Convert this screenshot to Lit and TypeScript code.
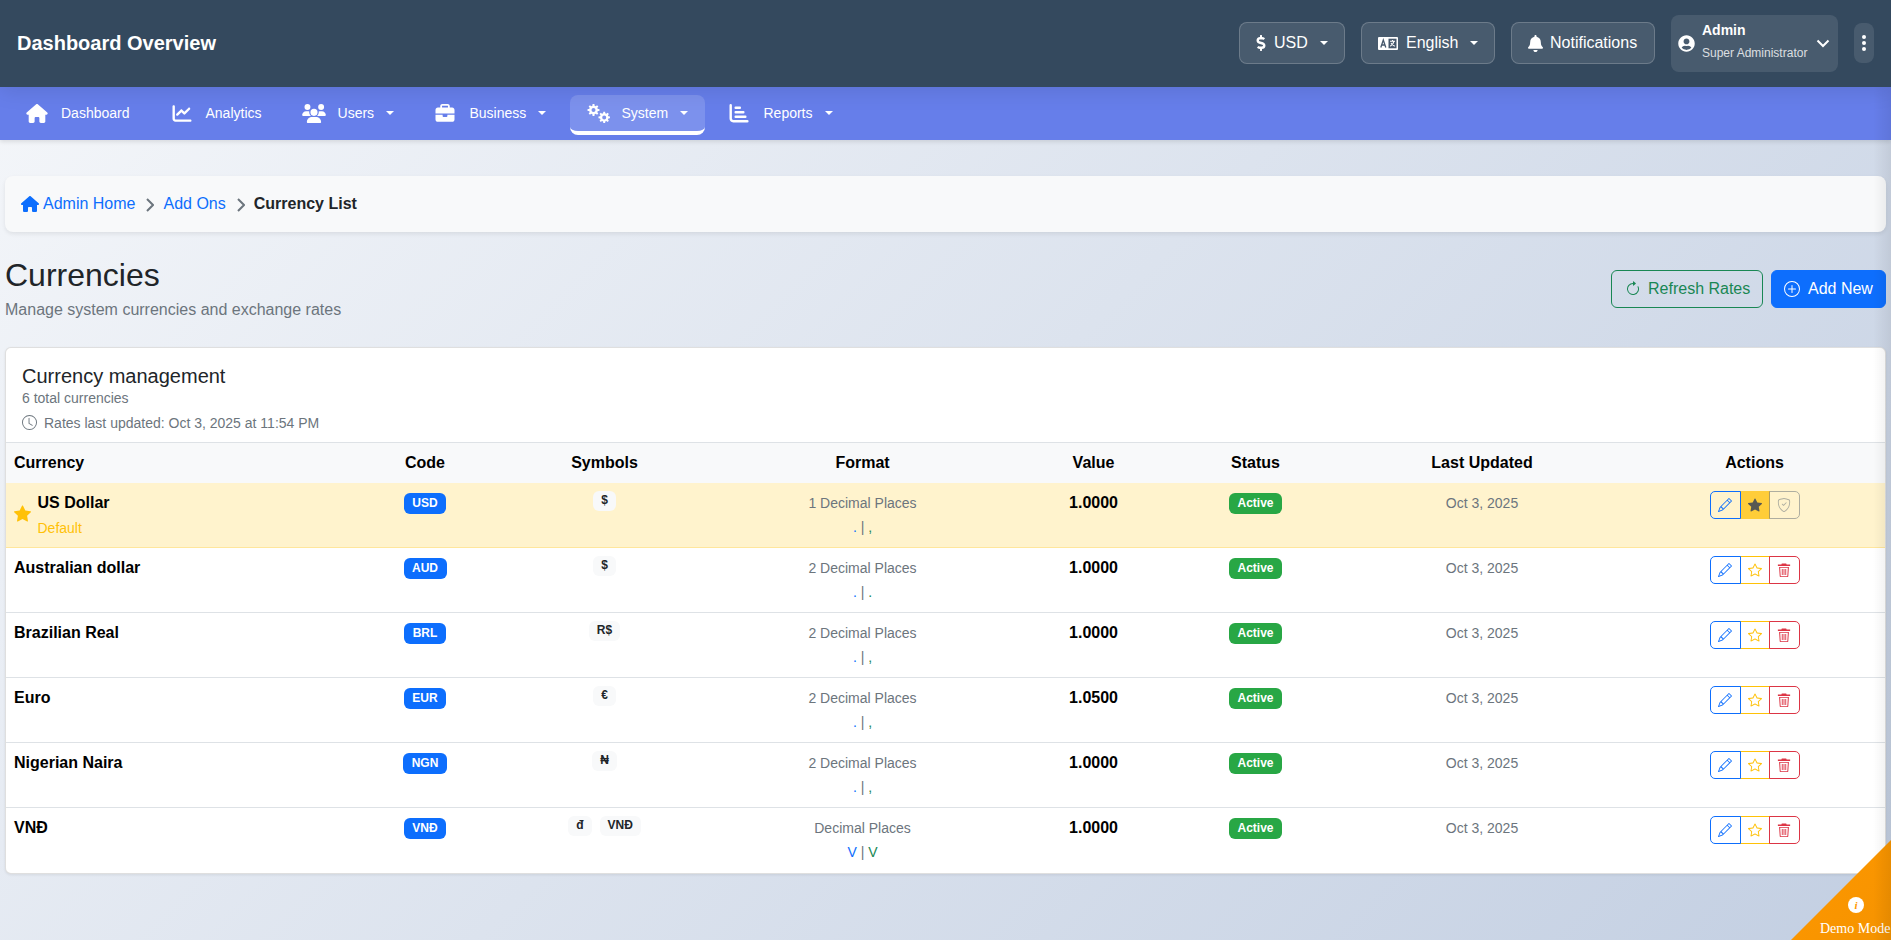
import { LitElement, html, css, svg } from "lit";
import { customElement } from "lit/decorators.js";

const I = {
  house: svg`<path d="M575.8 255.5c0 18-15 32.1-32 32.1h-32l.7 160.2c0 2.7-.2 5.4-.5 8.1V472c0 22.1-17.9 40-40 40H456c-1.1 0-2.2 0-3.3-.1c-1.4 .1-2.8 .1-4.2 .1H416 392c-22.1 0-40-17.9-40-40V448 384c0-17.7-14.3-32-32-32H256c-17.7 0-32 14.3-32 32v64 24c0 22.1-17.9 40-40 40H160 128.1c-1.5 0-3-.1-4.5-.2c-1.2 .1-2.4 .2-3.6 .2H104c-22.1 0-40-17.9-40-40V360c0-.9 0-1.9 .1-2.8V287.6H32c-18 0-32-14-32-32.1c0-9 3-17 10-24L266.4 8c7-7 15-8 22-8s15 2 21 7L564.8 231.5c8 7 12 15 11 24z"/>`,
  chart: svg`<path d="M64 64c0-17.7-14.3-32-32-32S0 46.3 0 64V400c0 44.2 35.8 80 80 80H480c17.7 0 32-14.3 32-32s-14.3-32-32-32H80c-8.8 0-16-7.2-16-16V64zm406.6 86.6c12.5-12.5 12.5-32.8 0-45.3s-32.8-12.5-45.3 0L320 210.7l-57.4-57.4c-12.5-12.5-32.8-12.5-45.3 0l-112 112c-12.5 12.5-12.5 32.8 0 45.3s32.8 12.5 45.3 0L240 221.3l57.4 57.4c12.5 12.5 32.8 12.5 45.3 0l128-128z"/>`,
  users: svg`<path d="M144 0a80 80 0 1 1 0 160A80 80 0 1 1 144 0zM512 0a80 80 0 1 1 0 160A80 80 0 1 1 512 0zM0 298.7C0 239.8 47.8 192 106.7 192h42.7c15.9 0 31 3.5 44.6 9.7c-1.3 7.2-1.9 14.7-1.9 22.3c0 38.2 16.8 72.5 43.3 96c-.2 0-.4 0-.7 0H21.3C9.6 320 0 310.4 0 298.7zM405.3 320c-.2 0-.4 0-.7 0c26.6-23.5 43.3-57.8 43.3-96c0-7.6-.7-15-1.9-22.3c13.6-6.3 28.7-9.7 44.6-9.7h42.7C592.2 192 640 239.8 640 298.7c0 11.8-9.6 21.3-21.3 21.3H405.3zM224 224a96 96 0 1 1 192 0 96 96 0 1 1 -192 0zM128 485.3C128 411.7 187.7 352 261.3 352H378.7C452.3 352 512 411.7 512 485.3c0 14.7-11.9 26.7-26.7 26.7H154.7c-14.7 0-26.7-11.9-26.7-26.7z"/>`,
  brief: svg`<path d="M184 48H328c4.4 0 8 3.6 8 8V96H176V56c0-4.4 3.6-8 8-8zm-56 8V96H64C28.7 96 0 124.7 0 160v96H192 320 512V160c0-35.3-28.7-64-64-64H384V56c0-30.9-25.1-56-56-56H184c-30.9 0-56 25.1-56 56zM512 288H320v32c0 17.7-14.3 32-32 32H224c-17.7 0-32-14.3-32-32V288H0V416c0 35.3 28.7 64 64 64H448c35.3 0 64-28.7 64-64V288z"/>`,
  dollar: svg`<path d="M209.2 233.4l-108-31.6C88.7 198.2 80 186.5 80 173.5c0-16.3 13.2-29.5 29.5-29.5h66.3c12.2 0 24.2 3.7 34.2 10.5 6.1 4.1 14.3 3.1 19.5-2l34.8-34c7.1-6.9 6.1-18.4-1.8-24.5C238 74.8 207.4 64.1 176 64V16c0-8.8-7.2-16-16-16h-32c-8.8 0-16 7.2-16 16v48h-2.5C45.8 64-5.4 118.7.5 183.6c4.2 46.1 39.4 83.6 83.8 96.6l102.5 30c12.5 3.7 21.2 15.3 21.2 28.3 0 16.3-13.2 29.5-29.5 29.5h-66.3C100 368 88 364.3 78 357.5c-6.1-4.1-14.3-3.1-19.5 2l-34.8 34c-7.1 6.9-6.1 18.4 1.8 24.5 24.5 19.2 55.1 29.9 86.5 30v48c0 8.8 7.2 16 16 16h32c8.8 0 16-7.2 16-16v-48.2c46.6-.9 90.3-28.6 105.7-72.7 21.5-61.6-14.6-124.8-72.5-141.7z"/>`,
  bell: svg`<path d="M224 512c35.32 0 63.97-28.65 63.97-64H160.03c0 35.35 28.65 64 63.97 64zm215.39-149.71c-19.32-20.76-55.47-51.99-55.47-154.29 0-77.7-54.48-139.9-127.94-155.16V32c0-17.67-14.32-32-31.98-32s-31.98 14.33-31.98 32v20.84C118.56 68.1 64.08 130.3 64.08 208c0 102.3-36.15 133.53-55.47 154.29-6 6.45-8.66 14.16-8.61 21.71.11 16.4 12.98 32 32.1 32h383.8c19.12 0 32-15.6 32.1-32 .05-7.55-2.61-15.27-8.61-21.71z"/>`,
  user: svg`<path d="M248 8C111 8 0 119 0 256s111 248 248 248 248-111 248-248S385 8 248 8zm0 96c48.6 0 88 39.4 88 88s-39.4 88-88 88-88-39.4-88-88 39.4-88 88-88zm0 344c-58.7 0-111.3-26.6-146.5-68.2 18.8-35.4 55.6-59.8 98.5-59.8 2.4 0 4.8.4 7.1 1.1 13 4.2 26.6 6.9 40.9 6.9 14.3 0 28-2.7 40.9-6.9 2.3-.7 4.7-1.1 7.1-1.1 42.9 0 79.7 24.4 98.5 59.8C359.3 421.4 306.7 448 248 448z"/>`,
  refresh: svg`<path fill-rule="evenodd" d="M8 3a5 5 0 1 0 4.546 2.914.5.5 0 0 1 .908-.417A6 6 0 1 1 8 2v1z"/><path d="M8 4.466V.534a.25.25 0 0 1 .41-.192l2.36 1.966c.12.1.12.284 0 .384L8.41 4.658A.25.25 0 0 1 8 4.466z"/>`,
  plus: svg`<path d="M8 15A7 7 0 1 1 8 1a7 7 0 0 1 0 14zm0 1A8 8 0 1 0 8 0a8 8 0 0 0 0 16z"/><path d="M8 4a.5.5 0 0 1 .5.5v3h3a.5.5 0 0 1 0 1h-3v3a.5.5 0 0 1-1 0v-3h-3a.5.5 0 0 1 0-1h3v-3A.5.5 0 0 1 8 4z"/>`,
  clock: svg`<path d="M8 3.5a.5.5 0 0 0-1 0V9a.5.5 0 0 0 .252.434l3.5 2a.5.5 0 0 0 .496-.868L8 8.71V3.5z"/><path d="M8 16A8 8 0 1 0 8 0a8 8 0 0 0 0 16zm7-8A7 7 0 1 1 1 8a7 7 0 0 1 14 0z"/>`,
  pencil: svg`<path d="M12.146.146a.5.5 0 0 1 .708 0l3 3a.5.5 0 0 1 0 .708l-10 10a.5.5 0 0 1-.168.11l-5 2a.5.5 0 0 1-.65-.65l2-5a.5.5 0 0 1 .11-.168l10-10zM11.207 2.5 13.5 4.793 14.793 3.5 12.5 1.207 11.207 2.5zm1.586 3L10.5 3.207 4 9.707V10h.5a.5.5 0 0 1 .5.5v.5h.5a.5.5 0 0 1 .5.5v.5h.293l6.5-6.5zm-9.761 5.175-.106.106-1.528 3.821 3.821-1.528.106-.106A.5.5 0 0 1 5 12.5V12h-.5a.5.5 0 0 1-.5-.5V11h-.5a.5.5 0 0 1-.468-.325z"/>`,
  star: svg`<path d="M2.866 14.85c-.078.444.36.791.746.593l4.39-2.256 4.389 2.256c.386.198.824-.149.746-.592l-.83-4.73 3.522-3.356c.33-.314.16-.888-.282-.95l-4.898-.696L8.465.792a.513.513 0 0 0-.927 0L5.354 5.12l-4.898.696c-.441.062-.612.636-.283.95l3.523 3.356-.83 4.73zm4.905-2.767-3.686 1.894.694-3.957a.565.565 0 0 0-.163-.505L1.71 6.745l4.052-.576a.525.525 0 0 0 .393-.288L8 2.223l1.847 3.658a.525.525 0 0 0 .393.288l4.052.575-2.906 2.77a.565.565 0 0 0-.163.506l.694 3.957-3.686-1.894a.503.503 0 0 0-.461 0z"/>`,
  starFill: svg`<path d="M3.612 15.443c-.386.198-.824-.149-.746-.592l.83-4.73L.173 6.765c-.329-.314-.158-.888.283-.95l4.898-.696L7.538.792c.197-.39.73-.39.927 0l2.184 4.327 4.898.696c.441.062.612.636.282.95l-3.522 3.356.83 4.73c.078.443-.36.79-.746.592L8 13.187l-4.389 2.256z"/>`,
  shield: svg`<path d="M5.338 1.59a61.44 61.44 0 0 0-2.837.856.481.481 0 0 0-.328.39c-.554 4.157.726 7.19 2.253 9.188a10.725 10.725 0 0 0 2.287 2.233c.346.244.652.42.893.533.12.057.218.095.293.118a.55.55 0 0 0 .101.025.615.615 0 0 0 .1-.025c.076-.023.174-.061.294-.118.24-.113.547-.29.893-.533a10.726 10.726 0 0 0 2.287-2.233c1.527-1.997 2.807-5.031 2.253-9.188a.48.48 0 0 0-.328-.39c-.651-.213-1.75-.56-2.837-.855C9.552 1.29 8.531 1.067 8 1.067c-.53 0-1.552.223-2.662.524zM5.072.56C6.157.265 7.31 0 8 0s1.843.265 2.928.56c1.11.3 2.229.655 2.887.87a1.54 1.54 0 0 1 1.044 1.262c.596 4.477-.787 7.795-2.465 9.99a11.775 11.775 0 0 1-2.517 2.453 7.159 7.159 0 0 1-1.048.625c-.28.132-.581.24-.829.24s-.548-.108-.829-.24a7.158 7.158 0 0 1-1.048-.625 11.777 11.777 0 0 1-2.517-2.453C1.928 10.487.545 7.169 1.141 2.692A1.54 1.54 0 0 1 2.185 1.43 62.456 62.456 0 0 1 5.072.56z"/><path d="M10.854 5.146a.5.5 0 0 1 0 .708l-3 3a.5.5 0 0 1-.708 0l-1.5-1.5a.5.5 0 1 1 .708-.708L7.5 7.793l2.646-2.647a.5.5 0 0 1 .708 0z"/>`,
  trash: svg`<path d="M5.5 .5h5l.5 1.2H15V3.4H1V1.7h4z"/><path d="M2.4 4.5h11.2l-.7 10.7a.8.8 0 0 1-.8.8H3.9a.8.8 0 0 1-.8-.8zM3.6 5.5l.6 9.5h7.6l.6-9.5z" fill-rule="evenodd"/><path d="M5.5 6.8h1v6.8h-1zM7.5 6.8h1v6.8h-1zM9.5 6.8h1v6.8h-1z"/>`,
};

function ic(p: unknown, vb: string, cls: string) {
  return html`<svg class=${cls} viewBox=${vb} fill="currentColor" aria-hidden="true">${p}</svg>`;
}

function gearPath(cx: number, cy: number, r: number, hole: number): string {
  const teeth = 8;
  const inner = r * 0.74;
  let d = "";
  for (let i = 0; i < teeth; i++) {
    const a = (i / teeth) * Math.PI * 2;
    const w = (Math.PI * 2) / teeth;
    const pts: [number, number][] = [
      [inner, a - w * 0.32],
      [r, a - w * 0.2],
      [r, a + w * 0.2],
      [inner, a + w * 0.32],
    ];
    for (const [rad, t] of pts) {
      const x = (cx + rad * Math.cos(t)).toFixed(2);
      const y = (cy + rad * Math.sin(t)).toFixed(2);
      d += `${d ? "L" : "M"}${x} ${y}`;
    }
  }
  d += `Z M${cx - hole} ${cy}a${hole} ${hole} 0 1 0 ${hole * 2} 0a${hole} ${hole} 0 1 0 ${-hole * 2} 0Z`;
  return d;
}

const gears = html`<svg class="nv" viewBox="0 0 24 19" aria-hidden="true">
  <path fill="#fff" fill-rule="evenodd" d=${gearPath(7.5, 6, 6, 2)}/>
  <path fill="#fff" fill-rule="evenodd" d=${gearPath(18.2, 13.4, 5.8, 2)}/>
</svg>`;

const bars = html`<svg class="nv" viewBox="0 0 24 19" fill="#fff" aria-hidden="true">
  <path d="M2.5 1.2a1.2 1.2 0 0 1 2.4 0v13.3c0 .8.6 1.4 1.4 1.4h14a1.3 1.3 0 0 1 0 2.6h-14c-2.3 0-3.8-1.6-3.8-3.9z"/>
  <rect x="7.5" y="2.5" width="6.5" height="2.4" rx="1"/>
  <rect x="7.5" y="7" width="10" height="2.4" rx="1"/>
  <rect x="7.5" y="11.5" width="12" height="2.4" rx="1"/>
</svg>`;

const lang = html`<svg class="lang" viewBox="0 0 20 13" aria-hidden="true">
  <path fill="#fff" d="M1 0h18a1 1 0 0 1 1 1v11a1 1 0 0 1-1 1H1a1 1 0 0 1-1-1V1a1 1 0 0 1 1-1z"/>
  <path fill="#46586c" d="M10.5 1.7h8v9.6h-8z"/>
  <path fill="none" stroke="#46586c" stroke-width="1.3" d="M2.8 10.5 5.3 3l2.5 7.5M3.7 8h3.2"/>
  <path fill="none" stroke="#fff" stroke-width="1.1" d="M12 4.2h5M14.5 3.1v1.1M16 4.2c-.4 2.5-2 4.1-3.8 5.1M13 5.9c.7 1.6 2 2.7 3.8 3.4"/>
</svg>`;

const chevron = html`<svg class="sep" viewBox="0 0 8 14" fill="none" stroke="currentColor" stroke-width="2" aria-hidden="true"><path d="M1 1l6 6-6 6"/></svg>`;

type Row = {
  name: string; code: string; syms: string[]; fmt: string; dec: string; thou: string; value: string; def?: boolean;
};

const rows: Row[] = [
  { name: "US Dollar", code: "USD", syms: ["$"], fmt: "1 Decimal Places", dec: ".", thou: ",", value: "1.0000", def: true },
  { name: "Australian dollar", code: "AUD", syms: ["$"], fmt: "2 Decimal Places", dec: ".", thou: ".", value: "1.0000" },
  { name: "Brazilian Real", code: "BRL", syms: ["R$"], fmt: "2 Decimal Places", dec: ".", thou: ",", value: "1.0000" },
  { name: "Euro", code: "EUR", syms: ["€"], fmt: "2 Decimal Places", dec: ".", thou: ",", value: "1.0500" },
  { name: "Nigerian Naira", code: "NGN", syms: ["₦"], fmt: "2 Decimal Places", dec: ".", thou: ",", value: "1.0000" },
  { name: "VNĐ", code: "VNĐ", syms: ["đ", "VNĐ"], fmt: "Decimal Places", dec: "V", thou: "V", value: "1.0000" },
];

@customElement("app-root")
export class AppRoot extends LitElement {
  static styles = css`
    :host {
      display: block;
      position: relative;
      height: 940px;
      overflow: hidden;
      font-family: "Liberation Sans", Arial, sans-serif;
      font-size: 16px;
      color: #212529;
      background: linear-gradient(135deg, #f5f7fa 0%, #c3cfe2 100%);
    }
    * { box-sizing: border-box; }
    svg { display: block; flex: none; }

    .top {
      position: relative;
      z-index: 2;
      height: 87px;
      background: #34495e;
      display: flex;
      align-items: center;
      padding: 0 17px 1px;
      color: #fff;
      box-shadow: 0 4px 20px rgba(0,0,0,.1);
    }
    .brand { font-size: 20px; font-weight: 700; margin-right: auto; }
    .tbtn {
      height: 42px;
      display: flex;
      align-items: center;
      background: rgba(255,255,255,.1);
      border: 1px solid rgba(255,255,255,.2);
      border-radius: 8px;
      margin-right: 16px;
      padding: 0 12px 0 16px;
      color: #fff;
      white-space: nowrap;
    }
    .tbtn.cur { width: 106px; }
    .tbtn.en { width: 134px; }
    .tbtn.no { width: 144px; }
    .tbtn .d { width: 10px; height: 16px; margin-right: 8px; }
    .lang { width: 20px; height: 13px; margin-right: 8px; }
    .tbtn .b { width: 15px; height: 17px; margin-right: 7px; }
    .caret {
      width: 0; height: 0;
      border-left: 4.8px solid transparent;
      border-right: 4.8px solid transparent;
      border-top: 4.8px solid currentColor;
      margin-left: 12px;
    }
    .adm {
      width: 167px;
      height: 57px;
      display: flex;
      align-items: center;
      background: rgba(255,255,255,.1);
      border-radius: 8px;
      padding: 0 8px 0 7px;
      margin-right: 16px;
    }
    .adm .u { width: 17px; height: 17px; margin-right: 7px; }
    .who { flex: 1; padding-bottom: 4px; }
    .who b { display: block; font-size: 14px; line-height: 21px; }
    .who span { display: block; font-size: 12px; line-height: 18px; opacity: .8; margin-top: 3px; white-space: nowrap; }
    .adm .ch { width: 14px; height: 14px; }
    .more {
      width: 20px;
      height: 40px;
      border-radius: 8px;
      background: rgba(255,255,255,.1);
      display: flex;
      flex-direction: column;
      align-items: center;
      justify-content: center;
      gap: 2px;
    }
    .more i { width: 4px; height: 4px; border-radius: 50%; background: #fff; }

    .nav {
      height: 53px;
      background: #667eea;
      display: flex;
      align-items: flex-start;
      padding: 8px 8px 0 9px;
      gap: 8px;
      color: #fff;
      font-size: 14px;
      box-shadow: 0 2px 4px rgba(0,0,0,.1);
    }
    .ni {
      height: 40px;
      display: flex;
      align-items: center;
      padding: 0 16px;
      border-radius: 8px;
      border-bottom: 4px solid transparent;
      white-space: nowrap;
    }
    .ni.car { padding-right: 15.3px; }
    .ni.on {
      background: rgba(255,255,255,.15);
      border-bottom-color: #fff;
      padding-right: 17.3px;
      margin-right: -2px;
    }
    .nv { width: 24px; height: 19px; margin-right: 12px; margin-top: 1px; }
    .ni .caret { margin-left: 12px; border-left-width: 4.2px; border-right-width: 4.2px; border-top-width: 4.2px; }

    main { padding: 36px 5px 0; }
    .crumb {
      height: 56px;
      background: #f8f9fa;
      border-radius: 8px;
      box-shadow: 0 2px 4px rgba(0,0,0,.08);
      display: flex;
      align-items: center;
      padding: 0 16px;
      margin-bottom: 24px;
    }
    .crumb a { color: #0d6efd; display: flex; align-items: center; }
    .crumb .h { width: 18px; height: 16px; margin-right: 4px; margin-top: -1px; }
    .sep { width: 8px; height: 14px; color: #6c757d; margin: 1px 9px 0 11px; }
    .crumb b { color: #212529; }

    .head { display: flex; align-items: center; margin-bottom: 25px; }
    .ttl { flex: 1; }
    h1 { margin: 0 0 4px; font-size: 32px; font-weight: 400; line-height: 38px; }
    .ttl p { margin: 0; color: #6c757d; line-height: 24px; }
    .btn {
      height: 38px;
      display: flex;
      align-items: center;
      border-radius: 6px;
      border: 1px solid #198754;
      color: #198754;
      white-space: nowrap;
    }
    .btn.r { width: 152px; padding-left: 12.5px; margin-right: 8px; }
    .btn.r svg { width: 16px; height: 16px; margin-right: 7.5px; }
    .btn.a { width: 115px; padding-left: 12px; background: #0d6efd; border-color: #0d6efd; color: #fff; }
    .btn.a svg { width: 16px; height: 16px; margin-right: 8px; }

    .card {
      background: #fff;
      border: 1px solid rgba(0,0,0,.125);
      border-radius: 6px;
      box-shadow: 0 1px 3px rgba(0,0,0,.08);
      overflow: hidden;
    }
    .ch2 { padding: 16px 16px 0; height: 94px; }
    h2 { margin: 0; font-size: 20px; font-weight: 400; line-height: 24px; }
    .ch2 .t { font-size: 14px; color: #6c757d; line-height: 21px; }
    .ch2 .t2 { font-size: 14px; color: #6c757d; line-height: 21px; margin-top: 4px; display: flex; align-items: center; }
    .ch2 .t2 svg { width: 15px; height: 15px; margin-right: 7px; margin-top: -2px; }

    table { width: 100%; border-collapse: collapse; table-layout: fixed; border-top: 1px solid #dee2e6; }
    th {
      height: 40px;
      padding: 0 8px;
      font-size: 16px;
      font-weight: 700;
      color: #000;
      background: #f8f9fa;
      text-align: center;
    }
    td {
      height: 65px;
      padding: 8px;
      vertical-align: top;
      text-align: center;
      border-top: 1px solid #dee2e6;
    }
    th:first-child, td:first-child { text-align: left; }
    .c1 { width: 344px; } .c2 { width: 150px; } .c3 { width: 209px; } .c4 { width: 307px; }
    .c5 { width: 155px; } .c6 { width: 169px; } .c7 { width: 284px; }
    tr.def td { background: #fff3cd; }
    tr.def + tr td { border-top-color: #ffe69c; }
    tbody tr:first-child td { border-top: none; }
    .name { font-weight: 700; color: #000; line-height: 24px; }
    .nm { display: flex; align-items: center; }
    .nm > svg { width: 17px; height: 17px; color: #ffc107; margin-right: 7px; margin-left: -.5px; margin-top: -2px; }
    .dflt { color: #ffc107; font-size: 14px; line-height: 21px; margin-top: 3px; }
    .pill {
      display: inline-block;
      height: 21px;
      line-height: 21px;
      padding: 0 8.5px;
      border-radius: 6px;
      font-size: 12px;
      font-weight: 700;
      color: #fff;
      margin-top: 2px;
      vertical-align: top;
    }
    .blue { background: #0d6efd; }
    .green { background: #28a745; }
    .sym {
      display: inline-block;
      height: 20px;
      line-height: 18px;
      padding: 0 8px;
      background: #f8f9fa;
      border-radius: 6px;
      font-size: 12px;
      font-weight: 700;
      margin: 0 4px;
      vertical-align: top;
    }
    .f1 { font-size: 14px; color: #6c757d; line-height: 21px; margin-top: 2px; }
    .f2 { font-size: 14px; color: #6c757d; line-height: 21px; margin-top: 3px; }
    .f2 .x { color: #0d6efd; } .f2 .y { color: #198754; }
    .val { font-weight: 700; color: #000; line-height: 24px; }
    .dt { font-size: 14px; color: #6c757d; line-height: 21px; margin-top: 2px; }
    .grp { display: inline-flex; height: 28px; vertical-align: top; }
    .ab {
      width: 30px;
      height: 28px;
      display: flex;
      align-items: center;
      justify-content: center;
      border: 1px solid;
      margin-left: -1px;
    }
    .ab svg { width: 14px; height: 14px; }
    .ab:first-child { width: 31px; border-radius: 5px 0 0 5px; margin-left: 0; }
    .ab:last-child { width: 31px; border-radius: 0 5px 5px 0; }
    .e { border-color: #0d6efd; color: #0d6efd; position: relative; z-index: 1; }
    .s { border-color: #ffc107; color: #ffc107; }
    .x1 { border-color: #dc3545; color: #dc3545; position: relative; z-index: 1; }
    .s.on { background: #ffc107; color: #212529; opacity: .75; }
    .sh { border-color: #6c757d; color: #6c757d; opacity: .55; }

    .demo {
      position: absolute;
      right: 0;
      bottom: 0;
      width: 100px;
      height: 100px;
      background: linear-gradient(135deg, #ff9800, #f59300);
      clip-path: polygon(100% 0, 100% 100%, 0 100%);
      color: #fff;
      font-family: "Liberation Serif", serif;
      font-size: 14px;
      overflow: hidden;
    }
    .demo .ci {
      position: absolute;
      left: 57px;
      top: 57px;
      width: 16px;
      height: 16px;
      border-radius: 50%;
      background: #fff;
      color: #ff9800;
      font-size: 11px;
      font-style: italic;
      font-weight: 700;
      line-height: 16px;
      text-align: center;
    }
    .demo .tx { position: absolute; left: 29px; top: 81px; line-height: 16px; white-space: nowrap; }
    .edge {
      position: absolute;
      top: 0;
      right: 0;
      bottom: 0;
      width: 18px;
      background: linear-gradient(90deg, rgba(0,0,0,0), rgba(0,0,0,.07));
      pointer-events: none;
    }
  `;

  render() {
    const navs: [unknown, string, boolean, boolean][] = [
      [ic(I.house, "0 0 576 512", "nv"), "Dashboard", false, false],
      [ic(I.chart, "0 0 512 512", "nv"), "Analytics", false, false],
      [ic(I.users, "0 0 640 512", "nv"), "Users", true, false],
      [ic(I.brief, "0 0 512 512", "nv"), "Business", true, false],
      [gears, "System", true, true],
      [bars, "Reports", true, false],
    ];
    return html`
      <header class="top">
        <div class="brand">Dashboard Overview</div>
        <div class="tbtn cur">${ic(I.dollar, "0 0 288 512", "d")}USD<span class="caret"></span></div>
        <div class="tbtn en">${lang}English<span class="caret"></span></div>
        <div class="tbtn no">${ic(I.bell, "0 0 448 512", "b")}Notifications</div>
        <div class="adm">
          ${ic(I.user, "0 0 496 512", "u")}
          <div class="who"><b>Admin</b><span>Super Administrator</span></div>
          <svg class="ch" viewBox="0 0 14 14" fill="none" stroke="#fff" stroke-width="2"><path d="M1.5 4.5 7 10l5.5-5.5"/></svg>
        </div>
        <div class="more"><i></i><i></i><i></i></div>
      </header>
      <nav class="nav">
        ${navs.map(([i, t, c, on]) => html`<div class="ni ${on ? "on" : ""} ${c ? "car" : ""}">${i}${t}${c ? html`<span class="caret"></span>` : ""}</div>`)}
      </nav>
      <main>
        <div class="crumb">
          <a>${ic(I.house, "0 0 576 512", "h")}Admin Home</a>${chevron}<a>Add Ons</a>${chevron}<b>Currency List</b>
        </div>
        <div class="head">
          <div class="ttl"><h1>Currencies</h1><p>Manage system currencies and exchange rates</p></div>
          <div class="btn r">${ic(I.refresh, "0 0 16 16", "")}Refresh Rates</div>
          <div class="btn a">${ic(I.plus, "0 0 16 16", "")}Add New</div>
        </div>
        <section class="card">
          <div class="ch2">
            <h2>Currency management</h2>
            <div class="t">6 total currencies</div>
            <div class="t2">${ic(I.clock, "0 0 16 16", "")}Rates last updated: Oct 3, 2025 at 11:54 PM</div>
          </div>
          <table>
            <thead><tr>
              <th class="c1">Currency</th><th class="c2">Code</th><th class="c3">Symbols</th><th class="c4">Format</th>
              <th class="c5">Value</th><th class="c6">Status</th><th class="c7">Last Updated</th><th>Actions</th>
            </tr></thead>
            <tbody>
              ${rows.map((r) => html`<tr class=${r.def ? "def" : ""}>
                <td>${r.def
                  ? html`<div class="nm">${ic(I.starFill, "0 0 16 16", "")}<div><div class="name">${r.name}</div><div class="dflt">Default</div></div></div>`
                  : html`<div class="name">${r.name}</div>`}</td>
                <td><span class="pill blue">${r.code}</span></td>
                <td>${r.syms.map((s) => html`<span class="sym">${s}</span>`)}</td>
                <td><div class="f1">${r.fmt}</div><div class="f2"><span class="x">${r.dec}</span> | <span class="y">${r.thou}</span></div></td>
                <td><div class="val">${r.value}</div></td>
                <td><span class="pill green">Active</span></td>
                <td><div class="dt">Oct 3, 2025</div></td>
                <td><div class="grp">
                  <div class="ab e">${ic(I.pencil, "0 0 16 16", "")}</div>
                  ${r.def
                    ? html`<div class="ab s on">${ic(I.starFill, "0 0 16 16", "")}</div><div class="ab sh">${ic(I.shield, "0 0 16 16", "")}</div>`
                    : html`<div class="ab s">${ic(I.star, "0 0 16 16", "")}</div><div class="ab x1">${ic(I.trash, "0 0 16 16", "")}</div>`}
                </div></td>
              </tr>`)}
            </tbody>
          </table>
        </section>
      </main>
      <div class="demo"><div class="ci">i</div><div class="tx">Demo Mode</div></div>
      <div class="edge"></div>
    `;
  }
}
